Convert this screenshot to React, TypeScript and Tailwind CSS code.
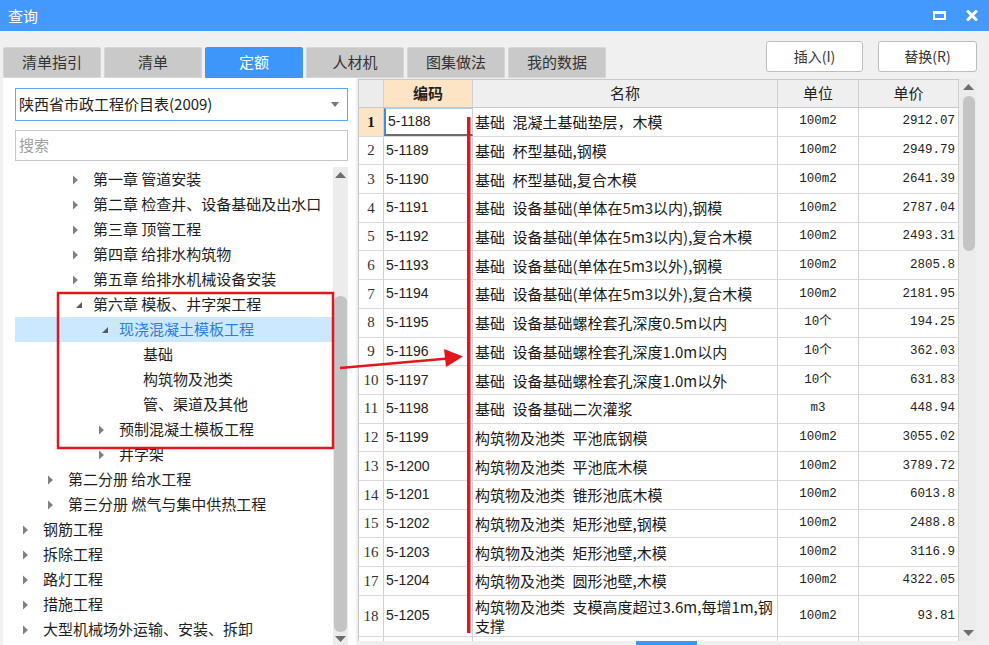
import React from "react";

type Node = { t: string; pad: string; icon: "closed" | "open" | "none"; sel?: boolean };

const tree: Node[] = [
  { t: "第一章 管道安装", pad: "pl-[58px]", icon: "closed" },
  { t: "第二章 检查井、设备基础及出水口", pad: "pl-[58px]", icon: "closed" },
  { t: "第三章 顶管工程", pad: "pl-[58px]", icon: "closed" },
  { t: "第四章 给排水构筑物", pad: "pl-[58px]", icon: "closed" },
  { t: "第五章 给排水机械设备安装", pad: "pl-[58px]", icon: "closed" },
  { t: "第六章 模板、井字架工程", pad: "pl-[58px]", icon: "open" },
  { t: "现浇混凝土模板工程", pad: "pl-[84px]", icon: "open", sel: true },
  { t: "基础", pad: "pl-[128px]", icon: "none" },
  { t: "构筑物及池类", pad: "pl-[128px]", icon: "none" },
  { t: "管、渠道及其他", pad: "pl-[128px]", icon: "none" },
  { t: "预制混凝土模板工程", pad: "pl-[84px]", icon: "closed" },
  { t: "井字架", pad: "pl-[84px]", icon: "closed" },
  { t: "第二分册 给水工程", pad: "pl-[33px]", icon: "closed" },
  { t: "第三分册 燃气与集中供热工程", pad: "pl-[33px]", icon: "closed" },
  { t: "钢筋工程", pad: "pl-[8px]", icon: "closed" },
  { t: "拆除工程", pad: "pl-[8px]", icon: "closed" },
  { t: "路灯工程", pad: "pl-[8px]", icon: "closed" },
  { t: "措施工程", pad: "pl-[8px]", icon: "closed" },
  { t: "大型机械场外运输、安装、拆卸", pad: "pl-[8px]", icon: "closed" },
];

type Row = { code: string; name: React.ReactNode; unit: string; price: string };

const S = "\u2002";

const rows: Row[] = [
  { code: "5-1188", name: `基础${S}混凝土基础垫层，木模`, unit: "100m2", price: "2912.07" },
  { code: "5-1189", name: `基础${S}杯型基础,钢模`, unit: "100m2", price: "2949.79" },
  { code: "5-1190", name: `基础${S}杯型基础,复合木模`, unit: "100m2", price: "2641.39" },
  { code: "5-1191", name: `基础${S}设备基础(单体在5m3以内),钢模`, unit: "100m2", price: "2787.04" },
  { code: "5-1192", name: `基础${S}设备基础(单体在5m3以内),复合木模`, unit: "100m2", price: "2493.31" },
  { code: "5-1193", name: `基础${S}设备基础(单体在5m3以外),钢模`, unit: "100m2", price: "2805.8" },
  { code: "5-1194", name: `基础${S}设备基础(单体在5m3以外),复合木模`, unit: "100m2", price: "2181.95" },
  { code: "5-1195", name: `基础${S}设备基础螺栓套孔深度0.5m以内`, unit: "10个", price: "194.25" },
  { code: "5-1196", name: `基础${S}设备基础螺栓套孔深度1.0m以内`, unit: "10个", price: "362.03" },
  { code: "5-1197", name: `基础${S}设备基础螺栓套孔深度1.0m以外`, unit: "10个", price: "631.83" },
  { code: "5-1198", name: `基础${S}设备基础二次灌浆`, unit: "m3", price: "448.94" },
  { code: "5-1199", name: `构筑物及池类${S}平池底钢模`, unit: "100m2", price: "3055.02" },
  { code: "5-1200", name: `构筑物及池类${S}平池底木模`, unit: "100m2", price: "3789.72" },
  { code: "5-1201", name: `构筑物及池类${S}锥形池底木模`, unit: "100m2", price: "6013.8" },
  { code: "5-1202", name: `构筑物及池类${S}矩形池壁,钢模`, unit: "100m2", price: "2488.8" },
  { code: "5-1203", name: `构筑物及池类${S}矩形池壁,木模`, unit: "100m2", price: "3116.9" },
  { code: "5-1204", name: `构筑物及池类${S}圆形池壁,木模`, unit: "100m2", price: "4322.05" },
  {
    code: "5-1205",
    name: (
      <>
        {`构筑物及池类${S}支模高度超过3.6m,每增1m,钢`}
        <br />
        支撑
      </>
    ),
    unit: "100m2",
    price: "93.81",
  },
];

const tabs = ["清单指引", "清单", "定额", "人材机", "图集做法", "我的数据"];

function TreeIcon({ kind }: { kind: "closed" | "open" }) {
  return (
    <svg width="20" height="10" viewBox="0 0 20 10" className="shrink-0">
      {kind === "closed" ? (
        <polygon points="0,0.5 5,5 0,9.5" fill="#808080" />
      ) : (
        <polygon points="9,2 9,8 3,8" fill="#5a5a5a" />
      )}
    </svg>
  );
}

function UpArrow() {
  return (
    <svg width="11" height="6" viewBox="0 0 11 6">
      <polygon points="0,6 5.5,0 11,6" fill="#6e6e6e" />
    </svg>
  );
}
function DownArrow() {
  return (
    <svg width="11" height="6" viewBox="0 0 11 6">
      <polygon points="0,0 5.5,6 11,0" fill="#6e6e6e" />
    </svg>
  );
}

export default function App() {
  return (
    <div className="relative w-[989px] h-[645px] overflow-hidden bg-[#f0f0f0] font-['Noto_Sans_CJK_SC',sans-serif] text-[#222]">
      {/* Title bar */}
      <div className="h-[31px] bg-[#4499fe] flex items-center justify-between pl-[8px] pr-[11px]">
        <span className="text-white text-[15px] leading-none">查询</span>
        <div className="flex items-center gap-[20px]">
          <div className="w-[13px] h-[9px] border-2 border-t-[3px] border-white" />
          <svg width="12" height="11" viewBox="0 0 12 11">
            <path d="M1 0.5 L11 10.5 M11 0.5 L1 10.5" stroke="white" strokeWidth="3" />
          </svg>
        </div>
      </div>

      {/* Toolbar */}
      <div className="h-[47px] flex justify-between">
        <div className="self-end flex gap-[3px] pl-[3px]">
          {tabs.map((t) => (
            <div
              key={t}
              className={
                t === "定额"
                  ? "w-[98px] h-[31px] flex items-center justify-center text-[15px] rounded-t-[2px] bg-[#3d97fb] text-white border border-[#3d97fb]"
                  : "w-[98px] h-[31px] flex items-center justify-center text-[15px] rounded-t-[2px] bg-[#c9c9c9] text-[#333] border border-[#d6d6d6]"
              }
            >
              {t}
            </div>
          ))}
        </div>
        <div className="flex gap-[15px] mt-[10px] mr-[12px] h-[31px]">
          <div className="w-[97px] h-[31px] bg-white border border-[#bdbdbd] rounded-[3px] flex items-center justify-center text-[14px] text-[#333]">
            插入(I)
          </div>
          <div className="w-[99px] h-[31px] bg-white border border-[#bdbdbd] rounded-[3px] flex items-center justify-center text-[14px] text-[#333]">
            替换(R)
          </div>
        </div>
      </div>

      {/* Main */}
      <div className="h-[567px] flex pl-[3px]">
        {/* Left panel */}
        <div className="w-[353px] h-full bg-white flex flex-col">
          <div className="mt-[10px] ml-[12px] w-[333px] h-[33px] border border-[#5ea8f2] flex items-center justify-between pl-[3px] pr-[8px] text-[15px] text-[#222]">
            <span>陕西省市政工程价目表(2009)</span>
            <svg width="8" height="5" viewBox="0 0 8 5">
              <polygon points="0,0 8,0 4,5" fill="#777" />
            </svg>
          </div>
          <div className="mt-[9px] ml-[12px] w-[333px] h-[31px] border border-[#c6c6c6] flex items-center pl-[3px] text-[15px] text-[#a0a0a0]">
            搜索
          </div>
          <div className="mt-[6px] flex flex-1 min-h-0">
            <div className="ml-[12px] w-[318px] flex flex-col">
              {tree.map((n) => (
                <div
                  key={n.t}
                  className={
                    "h-[25px] shrink-0 flex items-center text-[15px] whitespace-nowrap " +
                    n.pad +
                    (n.sel ? " bg-[#cce8ff] text-[#2b7fe3]" : " text-[#1e1e1e]")
                  }
                >
                  {n.icon !== "none" && <TreeIcon kind={n.icon} />}
                  <span>{n.t}</span>
                </div>
              ))}
            </div>
            <div className="w-[15px] bg-[#ececec] flex flex-col items-center">
              <div className="h-[11px] flex items-end">
                <UpArrow />
              </div>
              <div className="mt-[118px] w-[13px] h-[336px] rounded-[6px] bg-[#c4c4c4]" />
              <div className="mt-[4px]">
                <DownArrow />
              </div>
            </div>
          </div>
        </div>

        {/* Right block */}
        <div className="ml-[2px] flex-1 flex flex-col pt-[1px]">
          <div className="h-[562px] flex">
            {/* table */}
            <div className="w-[601px] h-full overflow-hidden border-l border-t border-[#c8c8c8] bg-white">
              {/* header */}
              <div className="h-[28px] flex border-b border-[#c8c8c8] text-[15px]">
                <div className="w-[25px] border-r border-[#d0d0d0] bg-[#ececec]" />
                <div className="w-[89px] border-r border-[#d0d0d0] bg-[#fce4c4] flex items-center justify-center font-bold">
                  编码
                </div>
                <div className="w-[305px] border-r border-[#d0d0d0] bg-[#efefef] flex items-center justify-center">
                  名称
                </div>
                <div className="w-[81px] border-r border-[#d0d0d0] bg-[#efefef] flex items-center justify-center">
                  单位
                </div>
                <div className="w-[100px] border-r border-[#d0d0d0] bg-[#efefef] flex items-center justify-center">
                  单价
                </div>
              </div>
              {rows.map((r, i) => {
                const last = i === rows.length - 1;
                const first = i === 0;
                return (
                  <div
                    key={r.code}
                    className={
                      (last ? "h-[41.5px]" : "h-[28.7px]") +
                      " flex border-b border-[#dadada]"
                    }
                  >
                    <div
                      className={
                        "w-[25px] border-r border-[#d0d0d0] flex items-center justify-center font-['Liberation_Serif',serif] text-[15px] " +
                        (first ? "bg-[#fce4c4] font-bold text-[#111]" : "text-[#333]")
                      }
                    >
                      {i + 1}
                    </div>
                    <div
                      className={
                        "w-[89px] border-r border-[#d0d0d0] flex items-center pl-[2px] font-['Liberation_Sans',sans-serif] text-[14px] text-[#222] " +
                        (first ? "border-l-2 border-l-[#3a8ee6] border-b-2 border-b-[#6b6b6b] border-t border-t-[#a8d0f7]" : "")
                      }
                    >
                      {r.code}
                    </div>
                    <div className="w-[305px] border-r border-[#d0d0d0] flex items-center pl-[2px] text-[15px] leading-[19px] whitespace-nowrap overflow-hidden text-[#1a1a1a]">
                      <span>{r.name}</span>
                    </div>
                    <div className="w-[81px] border-r border-[#d0d0d0] flex items-center justify-center font-['Liberation_Mono','Noto_Sans_CJK_SC',monospace] text-[12.5px] text-[#222]">
                      {r.unit}
                    </div>
                    <div className="w-[100px] border-r border-[#d0d0d0] flex items-center justify-end pr-[3px] font-['Liberation_Mono',monospace] text-[12.5px] text-[#222]">
                      {r.price}
                    </div>
                  </div>
                );
              })}
              <div className="h-[28px] flex border-b border-[#dadada]">
                <div className="w-[25px] border-r border-[#d0d0d0]" />
                <div className="w-[89px] border-r border-[#d0d0d0]" />
                <div className="w-[305px] border-r border-[#d0d0d0]" />
                <div className="w-[81px] border-r border-[#d0d0d0]" />
                <div className="w-[100px] border-r border-[#d0d0d0]" />
              </div>
            </div>
            {/* scrollbar */}
            <div className="w-[17px] h-full bg-[#ececec] flex flex-col items-center pl-[2px]">
              <div className="mt-[5px]">
                <UpArrow />
              </div>
              <div className="mt-[6px] w-[12px] h-[155px] rounded-[6px] bg-[#c4c4c4]" />
              <div className="mt-auto mb-[5px]">
                <DownArrow />
              </div>
            </div>
          </div>
          <div className="h-[4px] flex">
            <div className="ml-[278px] w-[61px] h-full bg-[#3d97fb]" />
          </div>
        </div>
      </div>

      {/* Annotations */}
      <svg
        className="absolute left-0 top-0 pointer-events-none"
        width="989"
        height="645"
        viewBox="0 0 989 645"
      >
        <rect x="58" y="293" width="275" height="155" fill="none" stroke="#e3161e" strokeWidth="2.5" />
        <line x1="340" y1="368" x2="448" y2="358.5" stroke="#e3161e" strokeWidth="2.5" />
        <polygon points="463,356.5 444,349 446,367" fill="#e3161e" />
        <rect x="467" y="117" width="3.5" height="516" fill="#e3161e" />
      </svg>
    </div>
  );
}
